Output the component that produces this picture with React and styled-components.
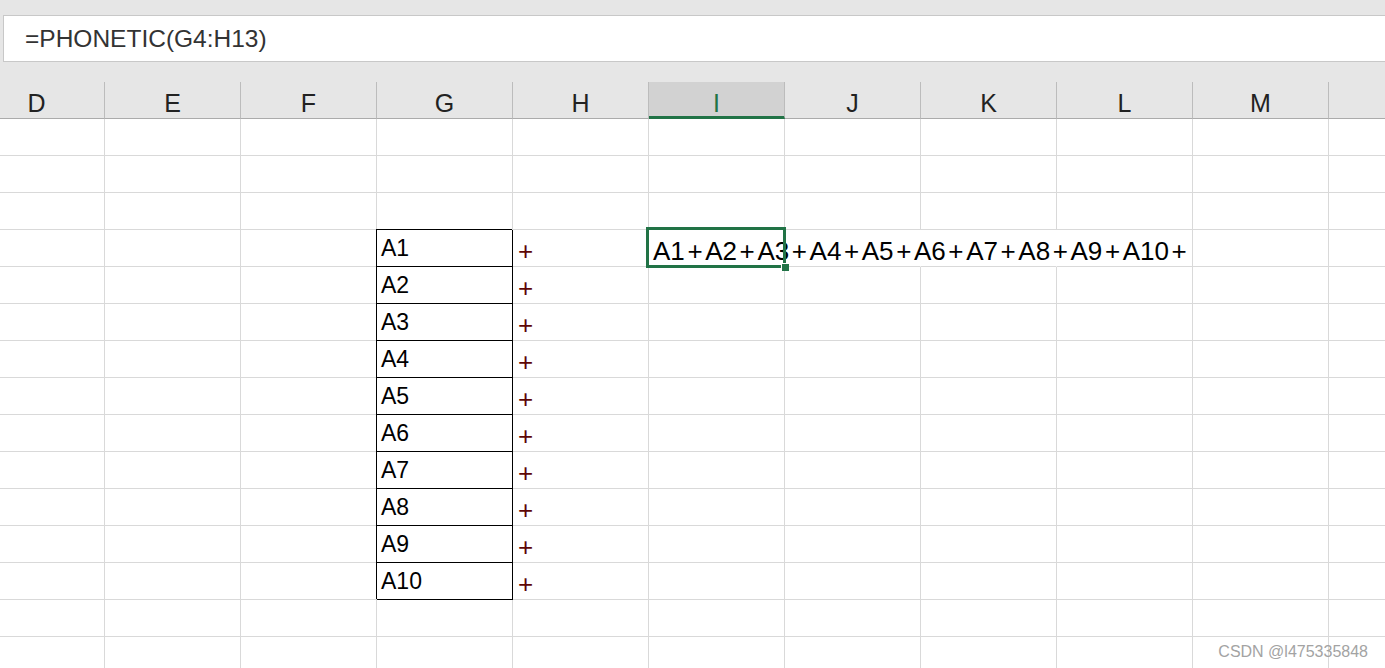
import React from "react";
import styled, { createGlobalStyle } from "styled-components";

const GlobalStyle = createGlobalStyle`
    html, body {
        margin: 0;
        padding: 0;
        background: #ffffff;
        overflow: hidden;
    }
    body {
        font-family: "Liberation Sans", Arial, sans-serif;
    }
`;

// N is only a sliver at the right edge, so it carries no label
const COLUMNS = ["D", "E", "F", "G", "H", "I", "J", "K", "L", "M", ""];
const ROW_COUNT = 15;
const SELECTED_COL = "I";

const joined = Array.from({ length: 10 }, (_, i) => `A${i + 1}`);

const Page = styled.div`
    width: 100vw;
    height: 100vh;
    overflow: hidden;
    position: relative;
    background: #ffffff;
`;

const Toolbar = styled.div`
    background: #e6e6e6;
    padding: 15px 0 20px 3px;
    display: flex;
`;

const FormulaBar = styled.div`
    flex: 1;
    margin-right: -4px;
    height: 47px;
    box-sizing: border-box;
    background: #ffffff;
    border: 1px solid #c8c8c8;
    display: flex;
    align-items: center;
    padding-left: 21px;
    font-size: 24.5px;
    color: #333333;
`;

const Sheet = styled.div`
    display: grid;
    grid-template-columns: repeat(${COLUMNS.length}, 136px);
    grid-auto-rows: 37px;
    margin-left: -31px;
`;

const HeaderCell = styled.div`
    box-sizing: border-box;
    background: ${({ $active }) => ($active ? "#d2d2d2" : "#e6e6e6")};
    border-right: 1px solid #bcbcbc;
    border-bottom: ${({ $active }) =>
        $active ? "3px solid #217346" : "1px solid #ababab"};
    text-align: center;
    padding-top: 7px;
    font-size: 25px;
    color: ${({ $active }) => ($active ? "#217346" : "#222222")};
`;

const Cell = styled.div`
    box-sizing: border-box;
    height: 37px;
    white-space: nowrap;
    border-right: 1px solid ${({ $boxed, $open }) =>
        $boxed ? "#000000" : $open ? "transparent" : "#d9d9d9"};
    border-bottom: 1px solid ${({ $boxed }) => ($boxed ? "#000000" : "#d9d9d9")};
    box-shadow: ${({ $boxed }) => ($boxed ? "-1px -1px 0 0 #000000" : "none")};
    position: ${({ $selected }) => ($selected ? "relative" : "static")};
    overflow: visible;
`;

const Value = styled.span`
    display: block;
    font-size: 23px;
    color: #000000;
    padding: 5px 0 0 4px;
`;

const PlusMark = styled.span`
    display: block;
    font-size: 26px;
    color: #5e0606;
    padding: 6px 0 0 5px;
`;

const Overflow = styled.span`
    display: block;
    font-size: 26px;
    color: #000000;
    padding: 6px 0 0 4px;
`;

const Joiner = styled.span`
    margin: 0 2.6px;
`;

const Selection = styled.div`
    position: absolute;
    top: -3px;
    left: -3px;
    right: -2px;
    bottom: -2px;
    border: 3px solid #217346;
    pointer-events: none;
`;

const FillHandle = styled.div`
    position: absolute;
    right: -6px;
    bottom: -6px;
    width: 7px;
    height: 7px;
    background: #217346;
    border-left: 1px solid #ffffff;
    border-top: 1px solid #ffffff;
`;

const Watermark = styled.div`
    position: absolute;
    right: 17px;
    bottom: 8px;
    font-size: 16px;
    line-height: 16px;
    color: #a3a3a3;
`;

function renderCell(col, row, index) {
    const key = `${index}-${row}`;
    const inList = row >= 4 && row <= 13;

    if (col === "G" && inList) {
        return (
            <Cell key={key} $boxed>
                <Value>A{row - 3}</Value>
            </Cell>
        );
    }
    if (col === "H" && inList) {
        return (
            <Cell key={key}>
                <PlusMark>+</PlusMark>
            </Cell>
        );
    }
    if (col === SELECTED_COL && row === 4) {
        return (
            <Cell key={key} $selected $open>
                <Overflow>
                    {joined.map((item) => (
                        <React.Fragment key={item}>
                            {item}
                            <Joiner>+</Joiner>
                        </React.Fragment>
                    ))}
                </Overflow>
                <Selection>
                    <FillHandle />
                </Selection>
            </Cell>
        );
    }
    // text from I4 runs over J4 and K4, so their right lines are hidden
    const open = row === 4 && (col === "J" || col === "K");
    return <Cell key={key} $open={open} />;
}

const App = () => {
    const rows = Array.from({ length: ROW_COUNT }, (_, i) => i + 1);

    return (
        <Page>
            <GlobalStyle />
            <Toolbar>
                <FormulaBar>=PHONETIC(G4:H13)</FormulaBar>
            </Toolbar>

            <Sheet>
                {COLUMNS.map((col, i) => (
                    <HeaderCell key={`h${i}`} $active={col === SELECTED_COL}>
                        {col}
                    </HeaderCell>
                ))}
                {rows.map((row) =>
                    COLUMNS.map((col, i) => renderCell(col, row, i))
                )}
            </Sheet>

            <Watermark>CSDN @l475335848</Watermark>
        </Page>
    );
};

export default App;
